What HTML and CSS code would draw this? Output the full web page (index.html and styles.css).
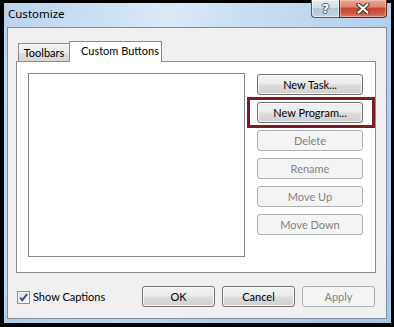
FILE: index.html
```html
<!DOCTYPE html>
<html>
<head>
<meta charset="utf-8">
<title>Customize</title>
<link rel="stylesheet" href="styles.css">
</head>
<body>
<div class="window">
  <div class="titlebar">
    <div class="title">Customize</div>
    <div class="caption-buttons">
      <div class="cap-btn help"><span class="help-glyph">?</span></div>
      <div class="cap-btn close">
        <svg class="close-glyph" width="14" height="11" viewBox="0 0 14 11">
          <path d="M2.5 1.5 L11.5 9.5 M11.5 1.5 L2.5 9.5" stroke="#3d3434" stroke-width="4.2" stroke-linecap="round" fill="none"/>
          <path d="M2.5 1.5 L11.5 9.5 M11.5 1.5 L2.5 9.5" stroke="#ffffff" stroke-width="2.2" stroke-linecap="round" fill="none"/>
        </svg>
      </div>
    </div>
  </div>
  <div class="client">
    <div class="tabs">
      <div class="tab">Toolbars</div>
      <div class="tab active">Custom Buttons</div>
    </div>
    <div class="tab-page">
      <div class="listbox"></div>
      <div class="side-buttons">
        <button class="btn">New Task...</button>
        <div class="highlight-wrap">
          <button class="btn">New Program...</button>
          <span class="highlight"></span>
        </div>
        <button class="btn" disabled>Delete</button>
        <button class="btn" disabled>Rename</button>
        <button class="btn" disabled>Move Up</button>
        <button class="btn" disabled>Move Down</button>
      </div>
    </div>
    <div class="footer">
      <div class="check">
        <span class="checkbox">
          <svg width="11" height="11" viewBox="0 0 11 11">
            <path d="M2 5.5 L4.3 8.2 L9 2.2" stroke="#3a4a86" stroke-width="1.9" fill="none" stroke-linejoin="miter"/>
          </svg>
        </span>
        <span class="check-label">Show Captions</span>
      </div>
      <div class="footer-buttons">
        <button class="btn">OK</button>
        <button class="btn">Cancel</button>
        <button class="btn" disabled>Apply</button>
      </div>
    </div>
  </div>
</div>
</body>
</html>
```

FILE: styles.css
```css
* {
  box-sizing: border-box;
}

html,
body {
  margin: 0;
  padding: 0;
}

body {
  width: 394px;
  height: 327px;
  overflow: hidden;
  background: #000;
  padding: 0 3px 4px 4px;
  font-family: "Lato", "Noto Sans", sans-serif;
  font-size: 11px;
  color: #000;
}

.window {
  width: 387px;
  height: 323px;
  display: flex;
  flex-direction: column;
  padding: 0 4px 4px 3px;
  background:
    linear-gradient(#000, #000) 0 0 / 100% 3px no-repeat,
    linear-gradient(180deg, rgba(255,255,255,0) 85%, rgba(160,196,230,0.6) 100%),
    linear-gradient(100deg, #b9d3ea 0%, #c8def3 18%, #d9e9f8 38%, #c9def2 55%, #bcd5ee 75%, #abc9e6 100%);
}

.titlebar {
  height: 27px;
  display: flex;
  align-items: flex-start;
}

.title {
  padding: 6px 0 0 1px;
  font-family: "Noto Sans", sans-serif;
  font-size: 11.5px;
  line-height: 16px;
  color: #000;
}

.caption-buttons {
  margin-left: auto;
  display: flex;
  height: 18px;
}

.cap-btn {
  height: 18px;
  display: flex;
  align-items: center;
  justify-content: center;
  border: 1px solid #4d5b6b;
  border-top: none;
}

.help {
  width: 28px;
  border-right: none;
  border-bottom-left-radius: 4px;
  background: linear-gradient(180deg, #e3eaf2 0%, #d3dee9 45%, #b7c7d8 50%, #c3d2e1 100%);
  box-shadow: inset 0 0 0 1px rgba(255,255,255,0.5);
}

.help-glyph {
  font-family: "DejaVu Sans", sans-serif;
  font-weight: bold;
  font-size: 13px;
  line-height: 13px;
  color: #ffffff;
  margin-top: -1px;
  text-shadow: 1px 0 #4b5563, -1px 0 #4b5563, 0 1px #4b5563, 0 -1px #4b5563;
}

.close {
  width: 48px;
  border-color: #5c2a22;
  border-bottom-right-radius: 4px;
  background: linear-gradient(180deg, #e9a99a 0%, #dc8570 40%, #c6432d 50%, #cf5a41 80%, #d8846b 100%);
  box-shadow: inset 0 0 0 1px rgba(255,220,210,0.45);
}

.close-glyph {
  display: block;
  margin-top: -1px;
}

.client {
  flex: 1;
  display: flex;
  flex-direction: column;
  background: #f0f0f0;
  border: 1px solid #7f8c99;
  padding: 13px 10px 11px 8px;
}

.tabs {
  height: 20px;
  display: flex;
  align-items: flex-end;
  padding-left: 2px;
}

.tab {
  height: 18px;
  width: 52px;
  border: 1px solid #898c95;
  border-bottom: none;
  background: linear-gradient(180deg, #f3f3f3 0%, #ebebeb 50%, #dedede 55%, #d6d6d6 100%);
  line-height: 17px;
  text-align: center;
  white-space: nowrap;
}

.tab.active {
  width: 93px;
  height: 21px;
  margin-left: -1px;
  margin-bottom: -1px;
  position: relative;
  z-index: 1;
  background: #fff;
  text-align: left;
  padding-left: 11px;
  line-height: 17px;
}

.tab-page {
  height: 212px;
  display: flex;
  align-items: flex-start;
  padding: 11px 11px 0 11px;
  background: #fff;
  border: 1px solid #898c95;
}

.listbox {
  flex: none;
  width: 217px;
  height: 184px;
  border: 1px solid #828790;
  background: #fff;
}

.side-buttons {
  margin-left: 12px;
  margin-top: 1px;
  width: 106px;
  display: flex;
  flex-direction: column;
  gap: 7px;
}

.highlight-wrap {
  position: relative;
  display: flex;
  flex-direction: column;
}

.highlight {
  position: absolute;
  left: -10px;
  right: -12px;
  top: -5px;
  bottom: -5px;
  border: 3px solid #7a1c28;
}

.btn {
  font: inherit;
  height: 21px;
  margin: 0;
  padding: 0;
  border: 1px solid #707070;
  border-radius: 3px;
  background: linear-gradient(180deg, #f3f3f3 0%, #ebebeb 48%, #dddddd 52%, #d0d0d0 100%);
  box-shadow: inset 0 0 0 1px rgba(255, 255, 255, 0.75);
  color: #000;
  line-height: 19px;
  text-align: center;
  white-space: nowrap;
}

.btn:disabled {
  border-color: #adb2b5;
  background: #f4f4f4;
  box-shadow: none;
  color: #838383;
}

.footer {
  margin-top: 13px;
  height: 21px;
  display: flex;
  align-items: center;
  padding-left: 1px;
  padding-right: 1px;
}

.check {
  display: flex;
  align-items: center;
  gap: 3px;
}

.checkbox {
  width: 13px;
  height: 13px;
  margin-top: 1px;
  border: 1px solid #8e8f8f;
  background: linear-gradient(135deg, #dcdfe4 0%, #f0f1f3 60%, #fbfbfb 100%);
  box-shadow: inset 0 0 0 1px #f3f3f3;
  display: flex;
  align-items: center;
  justify-content: center;
}

.checkbox svg {
  display: block;
}

.check-label {
  line-height: 16px;
}

.footer-buttons {
  margin-left: auto;
  display: flex;
  gap: 7px;
}

.footer-buttons .btn {
  width: 73px;
}
```
